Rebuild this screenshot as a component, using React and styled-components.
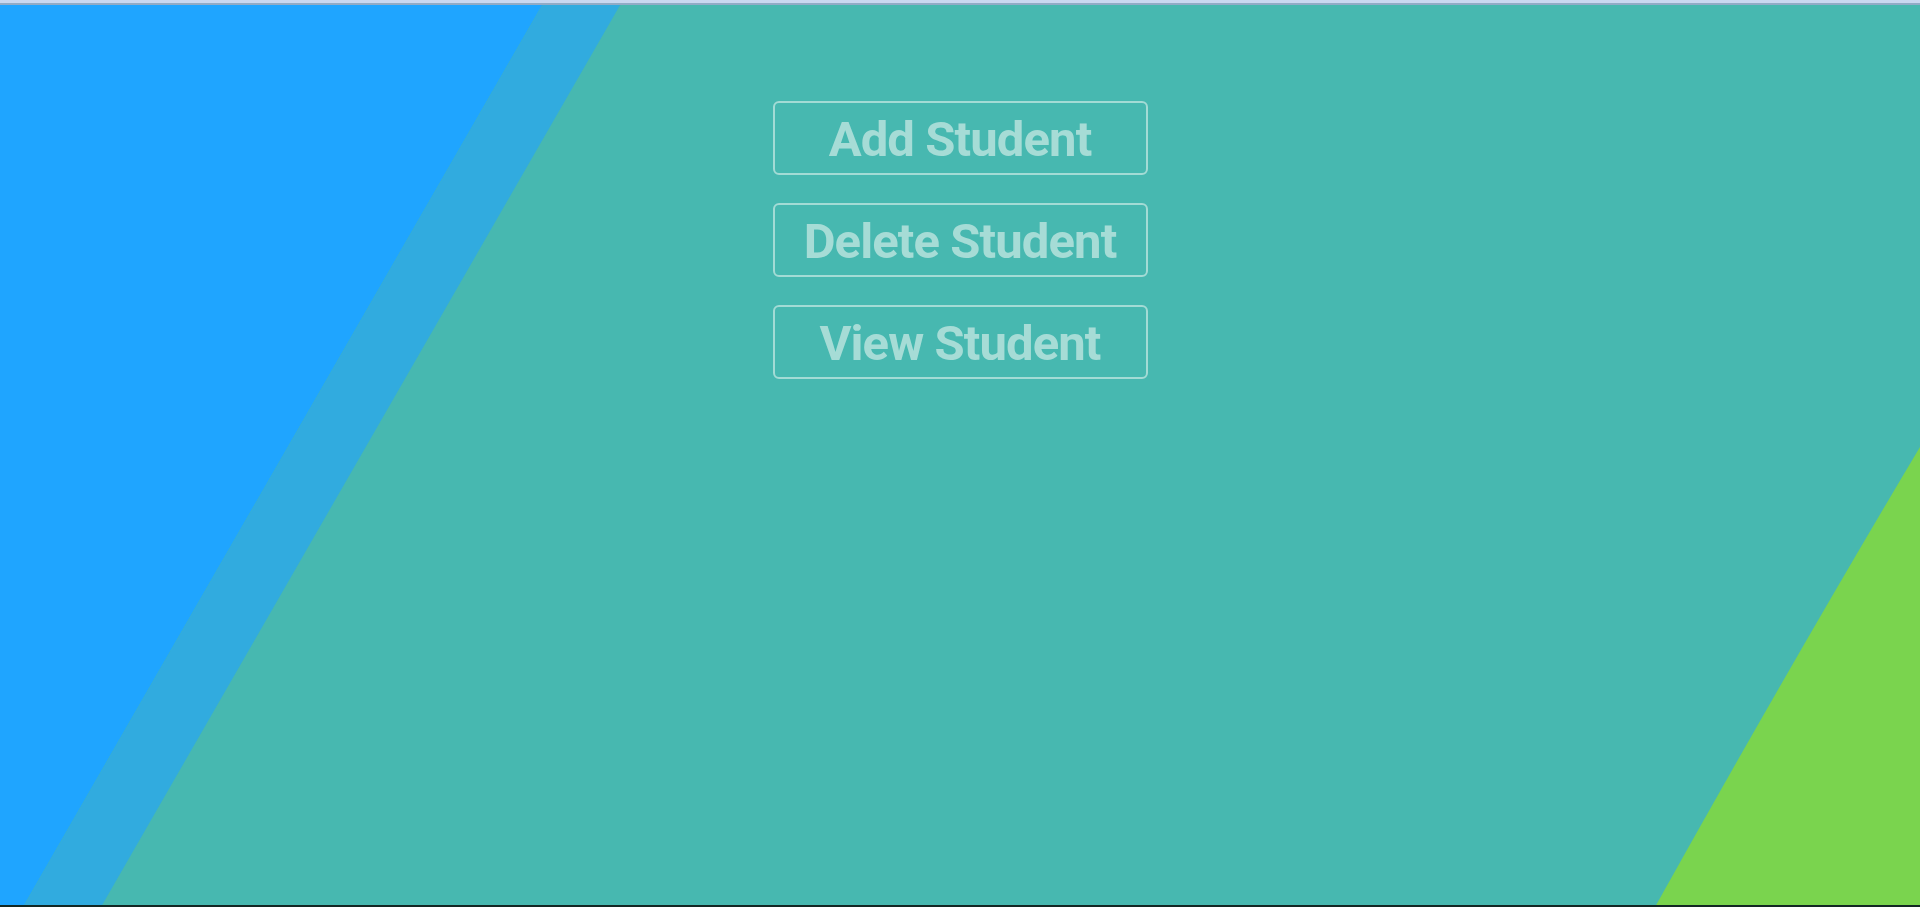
import React from 'react'
import styled, { createGlobalStyle } from 'styled-components'

const GlobalStyle = createGlobalStyle`
    html, body {
        margin: 0;
        padding: 0;
        background: #47b8b0;
        font-family: Roboto, "Liberation Sans", sans-serif;
    }
`

const Page = styled.div`
    position: relative;
    height: 907px;
    overflow: hidden;
    display: flex;
    flex-direction: column;
`

// drawn backdrop sits under everything
const Backdrop = styled.svg`
    position: absolute;
    inset: 0;
    width: 100%;
    height: 100%;
    z-index: 0;
`

const TopEdge = styled.div`
    position: relative;
    z-index: 1;
    height: 3px;
    background: #c9d8f0;
    border-bottom: 2px solid rgba(40, 90, 120, 0.35);
`

const Main = styled.main`
    position: relative;
    z-index: 1;
    flex: 1;
    display: flex;
    flex-direction: column;
    align-items: center;
    gap: 28px;
    padding-top: 96px;
`

const BottomEdge = styled.div`
    position: relative;
    z-index: 1;
    height: 2px;
    background: #132824;
`

const MenuButton = styled.button`
    box-sizing: border-box;
    width: 375px;
    height: 74px;
    background: transparent;
    border: 2.5px solid #a3dbd5;
    border-radius: 6px;
    color: #a6dcd6;
    font-family: Roboto, "Liberation Sans", sans-serif;
    font-weight: 700;
    font-size: 49px;
    letter-spacing: -0.9px;
    display: flex;
    align-items: center;
    justify-content: center;
    padding: 2px 0 0;
    cursor: pointer;
`

const items = ['Add Student', 'Delete Student', 'View Student']

export default function App() {
    return (
        <Page>
            <GlobalStyle />
            <Backdrop viewBox="0 0 1920 907" preserveAspectRatio="none">
                <rect x="0" y="0" width="1920" height="907" fill="#47b8b0" />
                <polygon points="0,0 545,0 23,907 0,907" fill="#1fa5ff" />
                <polygon points="545,0 623,0 101,907 23,907" fill="#31abdf" />
                <path d="M1920,447 Q1790,665 1655,907 L1920,907 Z" fill="#7ad44e" />
            </Backdrop>
            <TopEdge />
            <Main>
                {items.map(label => (
                    <MenuButton key={label}>{label}</MenuButton>
                ))}
            </Main>
            <BottomEdge />
        </Page>
    )
}
